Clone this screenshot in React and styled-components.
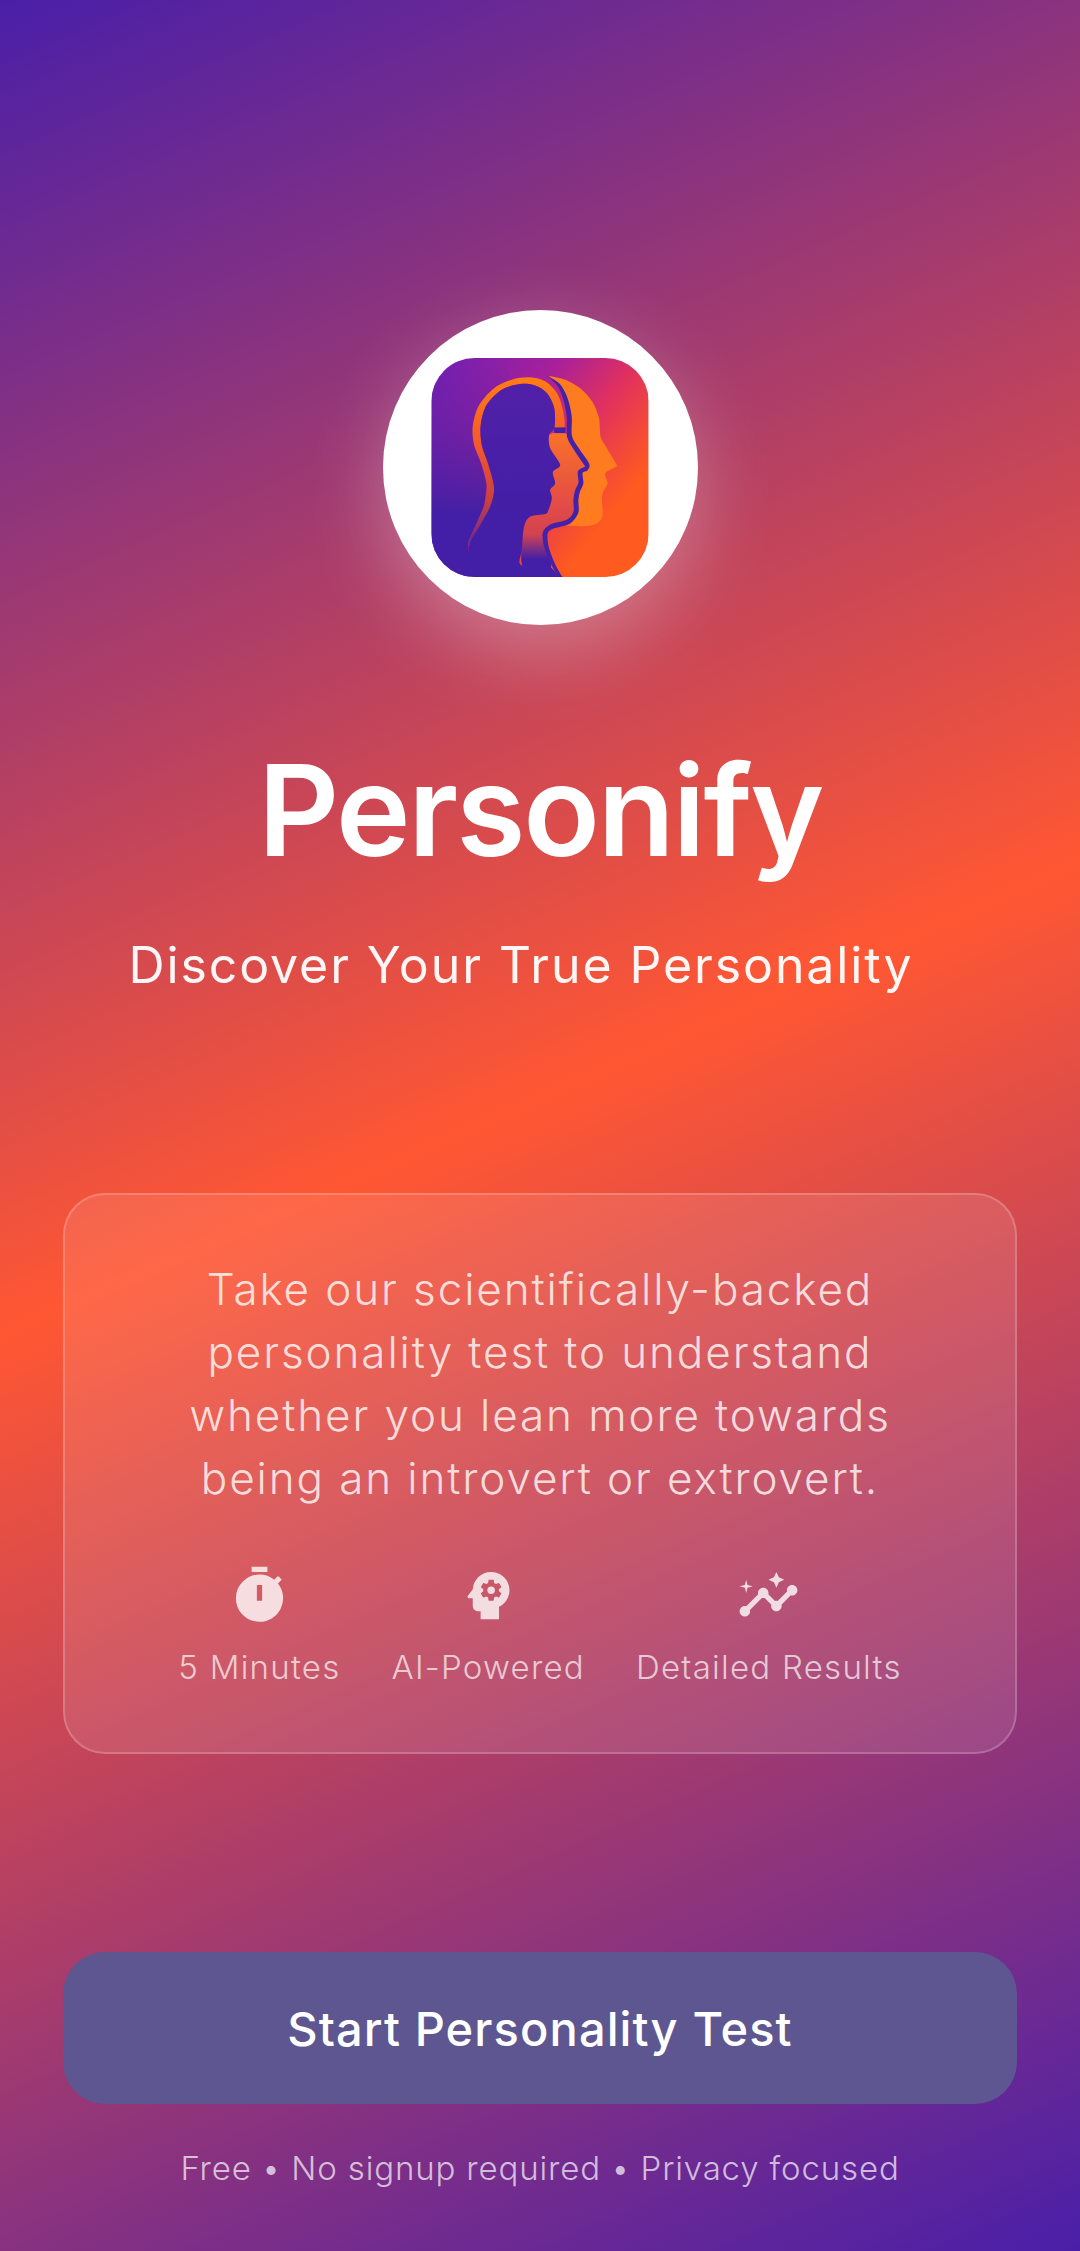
import React from "react";
import styled, { createGlobalStyle } from "styled-components";
import { MdTimer, MdPsychology, MdInsights } from "react-icons/md";

const Global = createGlobalStyle`
  html, body { margin: 0; padding: 0; }
  body { font-family: Inter, "Liberation Sans", sans-serif; }
`;

const Page = styled.div`
  width: 1080px;
  height: 2251px;
  overflow: hidden;
  display: flex;
  flex-direction: column;
  align-items: center;
  background: linear-gradient(156.4deg, #4a1fa8 0%, #ff5733 49%, #4a1fa8 100%);
`;

const LogoCircle = styled.div`
  width: 315px;
  height: 315px;
  margin-top: 310px;
  border-radius: 50%;
  background: #fff;
  box-shadow: 0 26px 79px rgba(255, 255, 255, 0.3);
  display: flex;
  align-items: center;
  justify-content: center;
`;

const Title = styled.h1`
  margin: 110px 0 0;
  font-size: 126px;
  line-height: 150px;
  font-weight: 600;
  color: #fff;
  letter-spacing: -2.2px;
`;

const Subtitle = styled.p`
  margin: 48px 38px 0 0;
  font-size: 50px;
  line-height: 64px;
  font-weight: 400;
  color: rgba(255, 255, 255, 0.95);
  letter-spacing: 1.9px;
`;

const Card = styled.section`
  box-sizing: border-box;
  width: 954px;
  height: 561px;
  margin-top: 196px;
  padding: 63px 40px 0;
  background: rgba(255, 255, 255, 0.1);
  border: 2.6px solid rgba(255, 255, 255, 0.2);
  border-radius: 42px;
  display: flex;
  flex-direction: column;
  align-items: center;
`;

const Body = styled.p`
  margin: 0;
  font-size: 44px;
  line-height: 63px;
  font-weight: 300;
  text-align: center;
  color: rgba(255, 255, 255, 0.8);
  letter-spacing: 1.9px;
  white-space: pre-line;
`;

const Features = styled.div`
  display: flex;
  justify-content: center;
  gap: 51px;
  margin-top: 54px;
`;

const Feature = styled.div`
  display: flex;
  flex-direction: column;
  align-items: center;
  gap: 18px;
  color: rgba(255, 255, 255, 0.8);
  svg { display: block; }
`;

const FeatureLabel = styled.span`
  font-size: 33px;
  line-height: 44px;
  font-weight: 300;
  color: rgba(255, 255, 255, 0.7);
  letter-spacing: 1.25px;
  white-space: nowrap;
`;

const StartButton = styled.button`
  width: 954px;
  height: 152px;
  margin-top: 198px;
  border: none;
  border-radius: 42px;
  background: #5d5690;
  color: #fff;
  font-family: inherit;
  font-size: 47px;
  font-weight: 500;
  letter-spacing: 1.1px;
`;

const Footnote = styled.p`
  margin: 42px 0 0;
  font-size: 33px;
  line-height: 44px;
  font-weight: 300;
  color: rgba(255, 255, 255, 0.7);
  letter-spacing: 0.85px;
`;

function smooth(points, closed) {
  const n = points.length;
  const at = (i) => (closed ? points[(i + n) % n] : points[Math.max(0, Math.min(n - 1, i))]);
  let d = `M${points[0][0]} ${points[0][1]}`;
  const last = closed ? n : n - 1;
  for (let i = 0; i < last; i++) {
    const p0 = at(i - 1), p1 = at(i), p2 = at(i + 1), p3 = at(i + 2);
    const k = 0.15;
    d += `C${p1[0] + (p2[0] - p0[0]) * k} ${p1[1] + (p2[1] - p0[1]) * k} ${p2[0] - (p3[0] - p1[0]) * k} ${p2[1] - (p3[1] - p1[1]) * k} ${p2[0]} ${p2[1]}`;
  }
  return d + (closed ? "Z" : "");
}

function ribbon(pts, widths) {
  const left = [];
  const right = [];
  pts.forEach((p, i) => {
    const a = pts[Math.max(0, i - 1)];
    const b = pts[Math.min(pts.length - 1, i + 1)];
    const dx = b[0] - a[0];
    const dy = b[1] - a[1];
    const len = Math.hypot(dx, dy) || 1;
    const w = widths[i] / 2;
    left.push([p[0] - (dy / len) * w, p[1] + (dx / len) * w]);
    right.push([p[0] + (dy / len) * w, p[1] - (dx / len) * w]);
  });
  return left.concat(right.reverse());
}

const bandPts = [[582,378],[578,325],[560,275],[525,240],[480,228],[425,235],[370,262],[325,315],[308,375],[312,430],[335,490],[350,550],[343,610],[320,665],[295,720],[300,722],[330,670],[360,615],[372,560],[355,490],[335,430],[332,370],[350,310],[395,265],[450,248],[495,252],[530,275],[552,320],[553,378]];
const outlinePts = [[533,224],[565,250],[585,290],[597,345],[598,405],[620,445],[650,490],[646,502],[630,512],[632,545],[622,568],[617,595],[617,632],[595,660],[545,675],[525,695],[530,740],[550,790],[578,840]];
const outlineWidths = [1,9,13,15,15,15,15,15,15,15,15,15,15,15,15,15,13,11,10];
const backPts = [[535,225],[585,235],[632,262],[667,302],[686,350],[691,405],[705,432],[738,488],[735,497],[705,515],[712,545],[700,568],[695,590],[697,640],[682,665],[650,673],[590,672],[595,660],[617,632],[617,595],[622,568],[632,545],[630,512],[650,490],[598,405],[597,345],[585,290],[565,250]];
const midPts = [[537,400],[590,397],[620,445],[650,490],[630,512],[632,545],[622,568],[617,595],[617,632],[595,660],[545,675],[525,695],[530,740],[540,800],[460,800],[457,700],[470,650],[500,600],[510,450]];
const frontPts = [[450,248],[495,252],[530,275],[552,320],[553,378],[537,400],[540,440],[570,490],[548,512],[555,545],[540,565],[545,590],[535,625],[525,637],[480,645],[462,675],[455,745],[452,790],[525,790],[545,800],[578,840],[578,848],[296,848],[296,760],[300,722],[330,670],[360,615],[372,560],[355,490],[335,430],[332,370],[350,310],[395,265]];
const leftPts = [[184,170],[400,170],[425,235],[370,262],[325,315],[308,375],[312,430],[335,490],[350,550],[343,610],[320,665],[295,720],[300,826],[184,826]];

const polygon = (pts) => `M${pts.map((p) => p.join(" ")).join("L")}Z`;

function Logo() {
  return (
    <svg width="218" height="219" viewBox="184 170 651 656" aria-label="Personify logo">
      <defs>
        <clipPath id="lClip"><rect x="184" y="170" width="651" height="656" rx="130" /></clipPath>
        <linearGradient id="lBg" gradientUnits="userSpaceOnUse" x1="184" y1="170" x2="835" y2="700">
          <stop offset="0" stopColor="#6d1fb5" />
          <stop offset="0.36" stopColor="#a8209a" />
          <stop offset="0.58" stopColor="#e03060" />
          <stop offset="0.85" stopColor="#ff5a1f" />
        </linearGradient>
        <linearGradient id="lLeft" gradientUnits="userSpaceOnUse" x1="0" y1="180" x2="0" y2="640">
          <stop offset="0" stopColor="#421fa6" stopOpacity="0" />
          <stop offset="1" stopColor="#421fa6" />
        </linearGradient>
        <linearGradient id="lFront" gradientUnits="userSpaceOnUse" x1="0" y1="250" x2="0" y2="640">
          <stop offset="0" stopColor="#5120a8" />
          <stop offset="1" stopColor="#421fa6" />
        </linearGradient>
        <linearGradient id="lBand" gradientUnits="userSpaceOnUse" x1="0" y1="230" x2="0" y2="722">
          <stop offset="0" stopColor="#ff7d14" />
          <stop offset="0.4" stopColor="#f5582a" />
          <stop offset="0.75" stopColor="#c9403f" />
          <stop offset="1" stopColor="#6a2a90" />
        </linearGradient>
        <linearGradient id="lMid" gradientUnits="userSpaceOnUse" x1="0" y1="400" x2="0" y2="772">
          <stop offset="0" stopColor="#f8702a" />
          <stop offset="0.55" stopColor="#e44c45" />
          <stop offset="0.8" stopColor="#d24350" />
          <stop offset="1" stopColor="#431fa6" />
        </linearGradient>
      </defs>
      <g clipPath="url(#lClip)">
        <rect x="184" y="170" width="651" height="656" fill="url(#lBg)" />
        <path d={polygon(leftPts)} fill="url(#lLeft)" />
        <path d={smooth(backPts, true)} fill="#ff7b1f" />
        <path d={smooth(midPts, true)} fill="url(#lMid)" />
        <path d={smooth(ribbon(outlinePts, outlineWidths), true)} fill="#4520a8" />
        <path d={smooth(bandPts, true)} fill="url(#lBand)" />
        <path d={smooth(frontPts, true)} fill="url(#lFront)" />
        <rect x="552" y="378" width="34" height="17" fill="#4520a8" />
      </g>
    </svg>
  );
}

export default function App() {
  return (
    <>
      <Global />
      <Page>
        <LogoCircle><Logo /></LogoCircle>
        <Title>Personify</Title>
        <Subtitle>Discover Your True Personality</Subtitle>
        <Card>
          <Body>{"Take our scientifically-backed\npersonality test to understand\nwhether you lean more towards\nbeing an introvert or extrovert."}</Body>
          <Features>
            <Feature><MdTimer size={63} /><FeatureLabel>5 Minutes</FeatureLabel></Feature>
            <Feature><MdPsychology size={63} /><FeatureLabel>AI-Powered</FeatureLabel></Feature>
            <Feature><MdInsights size={63} /><FeatureLabel>Detailed Results</FeatureLabel></Feature>
          </Features>
        </Card>
        <StartButton>Start Personality Test</StartButton>
        <Footnote>Free • No signup required • Privacy focused</Footnote>
      </Page>
    </>
  );
}
